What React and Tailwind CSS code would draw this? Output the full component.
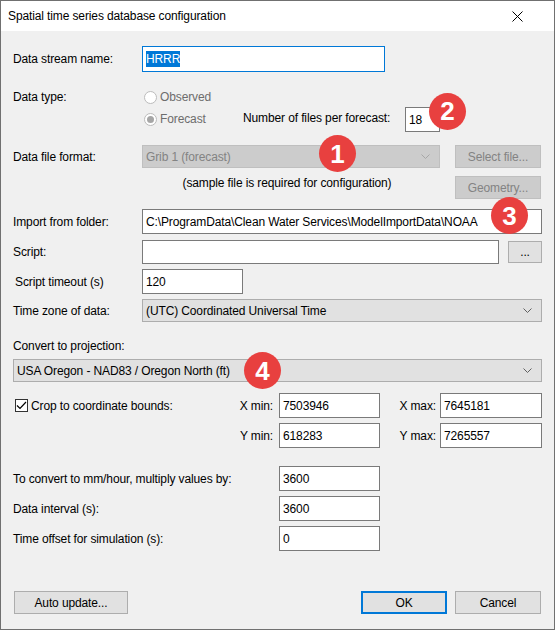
const FONT = { fontFamily: '"Liberation Sans", Arial, sans-serif', letterSpacing: "-0.12px" };

function Badge({ n, className }) {
  return (
    <div
      className={`absolute w-[37px] h-[37px] rounded-full bg-[#e8403f] text-white font-bold text-[26px] leading-none tracking-normal flex items-center justify-center ${className}`}
    >
      {n}
    </div>
  );
}

function Input({ children, className = "" }) {
  return (
    <div className={`relative bg-white border border-[#7a7a7a] px-[3px] pt-[3px] text-black ${className}`}>
      {children}
    </div>
  );
}

function Chevron({ color }) {
  return (
    <svg width="9" height="5" viewBox="0 0 9 5" className="shrink-0">
      <path d="M0.5 0.5 L4.5 4.5 L8.5 0.5" fill="none" stroke={color} strokeWidth="1" />
    </svg>
  );
}

function Combo({ value, disabled, className = "" }) {
  return (
    <div
      className={`relative flex items-center justify-between pl-[3px] pr-[9px] border ${
        disabled
          ? "bg-[#cccccc] border-[#bfbfbf] text-[#838383]"
          : "bg-[#e1e1e1] border-[#adadad] text-black"
      } ${className}`}
    >
      <span>{value}</span>
      <Chevron color={disabled ? "#a6a6a6" : "#606060"} />
    </div>
  );
}

function Button({ children, disabled, primary, className = "" }) {
  return (
    <div
      className={`flex items-center justify-center ${
        disabled
          ? "bg-[#cccccc] border border-[#bfbfbf] text-[#838383]"
          : primary
          ? "bg-[#e1e1e1] border-2 border-[#0078d7] text-black"
          : "bg-[#e1e1e1] border border-[#adadad] text-black"
      } ${className}`}
    >
      {children}
    </div>
  );
}

function Radio({ checked, label, className = "" }) {
  return (
    <div className={`flex items-center text-[#6d6d6d] ${className}`}>
      <div className="w-[13px] h-[13px] rounded-full border border-[#bcbcbc] bg-white flex items-center justify-center mr-[3px]">
        {checked && <div className="w-[7px] h-[7px] rounded-full bg-[#a6a6a6]" />}
      </div>
      <span>{label}</span>
    </div>
  );
}

export default function App() {
  return (
    <div
      style={FONT}
      className="w-[555px] h-[630px] border border-[#707070] bg-[#f0f0f0] flex flex-col text-[12px] text-black overflow-hidden"
    >
      {/* title bar */}
      <div className="h-[30px] bg-white flex items-center justify-between pl-[7px] pr-[31px] shrink-0">
        <span className="text-[12px]">Spatial time series database configuration</span>
        <svg width="11" height="11" viewBox="0 0 11 11">
          <path d="M0.5 0.5 L10.5 10.5 M10.5 0.5 L0.5 10.5" stroke="#000" strokeWidth="1" />
        </svg>
      </div>

      <div className="flex flex-col px-[12px]">
        {/* Data stream name */}
        <div className="flex items-center mt-[15px] h-[26px]">
          <span className="w-[129px]">Data stream name:</span>
          <div className="w-[243px] h-[26px] bg-white border border-[#0078d7] px-[3px] flex items-center">
            <span className="bg-[#0078d7] text-white leading-[16px]">HRRR</span>
          </div>
        </div>

        {/* Data type */}
        <div className="flex items-center mt-[16px] h-[18px]">
          <span className="w-[131px]">Data type:</span>
          <Radio label="Observed" />
        </div>
        <div className="flex items-center h-[26px]">
          <div className="w-[131px]" />
          <Radio checked label="Forecast" className="w-[99px]" />
          <span className="w-[162px] mb-[2px]">Number of files per forecast:</span>
          <Input className="w-[35px] h-[25px]">
            18
            <Badge n="2" className="left-[23px] top-[-15px]" />
          </Input>
        </div>

        {/* Data file format */}
        <div className="flex items-center mt-[13px] h-[23px]">
          <span className="w-[129px]">Data file format:</span>
          <div className="relative">
            <Combo disabled value="Grib 1 (forecast)" className="w-[298px] h-[23px]" />
            <Badge n="1" className="left-[177px] top-[-10px]" />
          </div>
          <Button disabled className="ml-[15px] w-[86px] h-[23px]">
            Select file...
          </Button>
        </div>
        <div className="flex items-start mt-[8px] h-[23px]">
          <div className="ml-[129px] w-[290px] text-center leading-[14px]">
            (sample file is required for configuration)
          </div>
          <div className="flex-1" />
          <Button disabled className="w-[86px] h-[23px] mr-[1px]">
            Geometry...
          </Button>
        </div>

        {/* Import from folder */}
        <div className="flex items-center mt-[10px] h-[25px]">
          <span className="w-[129px]">Import from folder:</span>
          <Input className="flex-1 h-[25px]">
            C:\ProgramData\Clean Water Services\ModelImportData\NOAA
            <Badge n="3" className="left-[348px] top-[-13px]" />
          </Input>
        </div>

        {/* Script */}
        <div className="flex items-center mt-[6px] h-[24px]">
          <span className="w-[129px]">Script:</span>
          <Input className="flex-1 h-[24px]" />
          <Button className="ml-[9px] w-[34px] h-[22px]">...</Button>
        </div>

        {/* Script timeout */}
        <div className="flex items-center mt-[5px] h-[25px]">
          <span className="w-[129px] pl-[2px]">Script timeout (s)</span>
          <Input className="w-[101px] h-[25px]">120</Input>
        </div>

        {/* Time zone */}
        <div className="flex items-center mt-[5px] h-[23px]">
          <span className="w-[129px]">Time zone of data:</span>
          <Combo value="(UTC) Coordinated Universal Time" className="flex-1 h-[23px]" />
        </div>

        {/* Projection */}
        <div className="mt-[17px] leading-[14px]">Convert to projection:</div>
        <div className="relative mt-[6px]">
          <Combo value="USA Oregon - NAD83 / Oregon North (ft)" className="h-[23px]" />
          <Badge n="4" className="left-[231px] top-[-7px]" />
        </div>

        {/* Crop bounds */}
        <div className="flex items-center mt-[11px] h-[25px]">
          <div className="w-[266px] flex items-center">
            <div className="ml-[2px] w-[13px] h-[13px] border border-[#333333] bg-white flex items-center justify-center">
              <svg width="11" height="9" viewBox="0 0 11 9">
                <path d="M1 4.5 L4 7.5 L10 1" fill="none" stroke="#000" strokeWidth="1.2" />
              </svg>
            </div>
            <span className="ml-[3px]">Crop to coordinate bounds:</span>
            <span className="ml-auto pr-[6px]">X min:</span>
          </div>
          <Input className="w-[101px] h-[25px]">7503946</Input>
          <span className="w-[60px] text-right pr-[4px]">X max:</span>
          <Input className="flex-1 h-[25px]">7645181</Input>
        </div>
        <div className="flex items-center mt-[5px] h-[25px]">
          <span className="w-[266px] text-right pr-[6px]">Y min:</span>
          <Input className="w-[101px] h-[25px]">618283</Input>
          <span className="w-[60px] text-right pr-[4px]">Y max:</span>
          <Input className="flex-1 h-[25px]">7265557</Input>
        </div>

        {/* Conversions */}
        <div className="flex items-center mt-[18px] h-[25px]">
          <span className="w-[266px]">To convert to mm/hour, multiply values by:</span>
          <Input className="w-[101px] h-[25px]">3600</Input>
        </div>
        <div className="flex items-center mt-[5px] h-[25px]">
          <span className="w-[266px]">Data interval (s):</span>
          <Input className="w-[101px] h-[25px]">3600</Input>
        </div>
        <div className="flex items-center mt-[5px] h-[25px]">
          <span className="w-[266px]">Time offset for simulation (s):</span>
          <Input className="w-[101px] h-[25px]">0</Input>
        </div>

        {/* Buttons */}
        <div className="flex items-center mt-[40px] h-[23px] px-[1px]">
          <Button className="w-[114px] h-[23px]">Auto update...</Button>
          <div className="flex-1" />
          <Button primary className="w-[86px] h-[23px]">OK</Button>
          <Button className="ml-[8px] w-[86px] h-[23px]">Cancel</Button>
        </div>
      </div>
    </div>
  );
}
